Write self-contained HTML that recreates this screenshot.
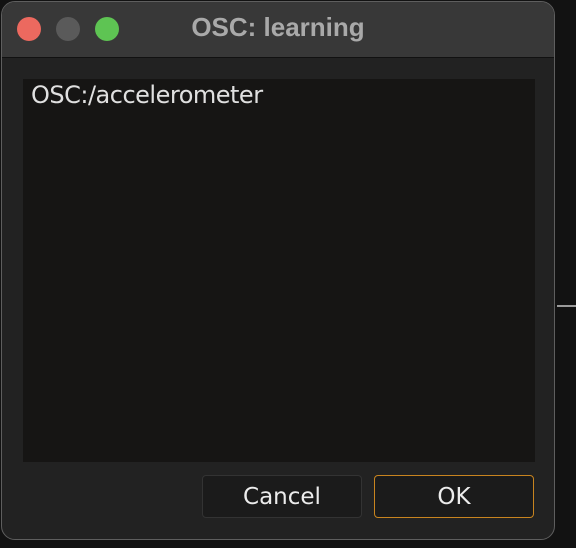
<!DOCTYPE html>
<html><head><style>
html,body{margin:0;padding:0;width:576px;height:548px;background:#121212;overflow:hidden;font-family:"DejaVu Sans","Liberation Sans",sans-serif;}
.win{position:absolute;left:1px;top:1px;width:552px;height:537px;border:1px solid #5e5e5e;border-radius:14px;background:#222222;overflow:hidden;}
.tb{position:absolute;left:0;top:0;width:100%;height:55px;background:#383838;border-bottom:1px solid #111;}
.dot{position:absolute;top:15px;width:24px;height:24px;border-radius:50%;}
.title{position:absolute;left:0;width:100%;top:10px;text-align:center;color:#a9a9a9;font-weight:bold;font-size:26px;font-family:"Liberation Sans",sans-serif;}
.box{position:absolute;left:21px;top:77px;width:512px;height:383px;background:#161514;}
.box span{position:absolute;left:8px;top:2px;color:#e0e0e0;font-size:24px;letter-spacing:-0.5px;}
.btn{position:absolute;top:473px;height:43px;border-radius:4px;background:#1b1b1b;color:#ececec;font-size:23px;text-align:center;line-height:43px;box-sizing:border-box;}
.line{position:absolute;left:557px;top:305px;width:19px;height:2px;background:#9a9a9a;}
</style></head><body>
<div class="line"></div>
<div class="win">
<div class="tb">
<div class="dot" style="left:15px;background:#ec695f"></div>
<div class="dot" style="left:54px;background:#5a5a5a"></div>
<div class="dot" style="left:93px;background:#5ec453"></div>
<div class="title">OSC: learning</div>
</div>
<div class="box"><span>OSC:/accelerometer</span></div>
<div class="btn" style="left:200px;width:160px;border:1px solid #333;">Cancel</div>
<div class="btn" style="left:372px;width:160px;border:1.5px solid #c8841f;">OK</div>
</div>
</body></html>
